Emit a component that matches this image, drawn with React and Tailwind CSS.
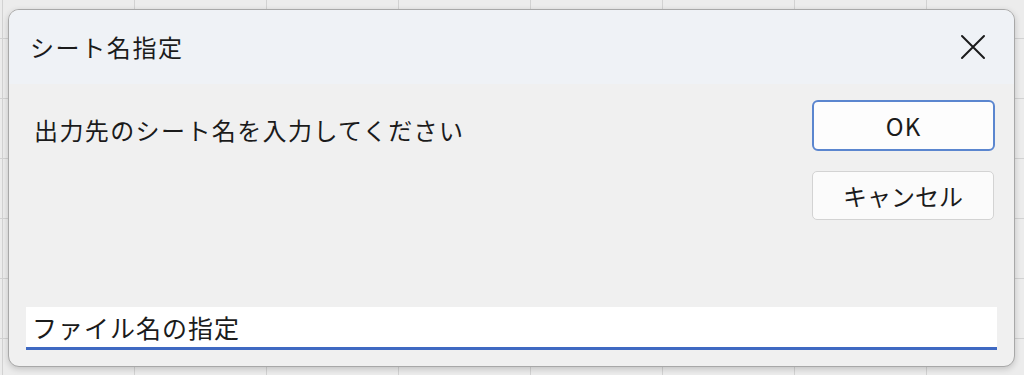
import React from "react";

const font = { fontFamily: '"Noto Sans CJK JP", "Noto Sans", sans-serif' };

export default function App() {
  return (
    <div
      className="w-[1024px] h-[375px] overflow-hidden bg-[#ececec] bg-[linear-gradient(to_right,#d2d2d2_1px,transparent_1px),linear-gradient(to_bottom,#d2d2d2_1px,transparent_1px)] bg-[size:132px_60px] bg-[position:2px_38px] pl-[8px] pt-[9px]"
      style={font}
    >
      <div className="w-[1007px] h-[358px] rounded-[11px] border border-[#a8a8a8] bg-[#f0f0f0] shadow-[0_2px_6px_rgba(0,0,0,0.18)] overflow-hidden flex flex-col text-[#1b1b1b]">
        <div className="h-[74px] shrink-0 bg-[#eff2f6] flex items-center justify-between pl-[21px] pr-[28px]">
          <span className="text-[24px] leading-none tracking-[1.6px]">シート名指定</span>
          <svg width="26" height="26" viewBox="0 0 26 26" className="text-[#1b1b1b]">
            <path d="M2 2 L24 24 M24 2 L2 24" stroke="currentColor" strokeWidth="2" strokeLinecap="round" />
          </svg>
        </div>
        <div className="flex-1 flex flex-col pl-[17px] pr-[11px]">
          <div className="flex justify-between pt-[16px]">
            <span className="text-[24px] leading-none pl-[8px] pt-[18px] tracking-[1.4px]">出力先のシート名を入力してください</span>
            <div className="flex flex-col gap-[20px] pr-[8px]">
              <button className="w-[183px] h-[51px] rounded-[6px] border-2 border-[#5b86cf] bg-[#fdfdfd] text-[24px] leading-none flex items-center justify-center tracking-[1px]">
                OK
              </button>
              <button className="w-[182px] h-[49px] rounded-[5px] border border-[#d3d3d3] bg-[#fbfbfb] text-[24px] leading-none flex items-center justify-center">
                キャンセル
              </button>
            </div>
          </div>
          <div className="mt-auto mb-[16px] w-[971px] h-[43px] bg-white border-b-[3px] border-[#3f69c2] flex items-center pl-[6px]">
            <span className="text-[25px] leading-none tracking-[1px]">ファイル名の指定</span>
          </div>
        </div>
      </div>
    </div>
  );
}
